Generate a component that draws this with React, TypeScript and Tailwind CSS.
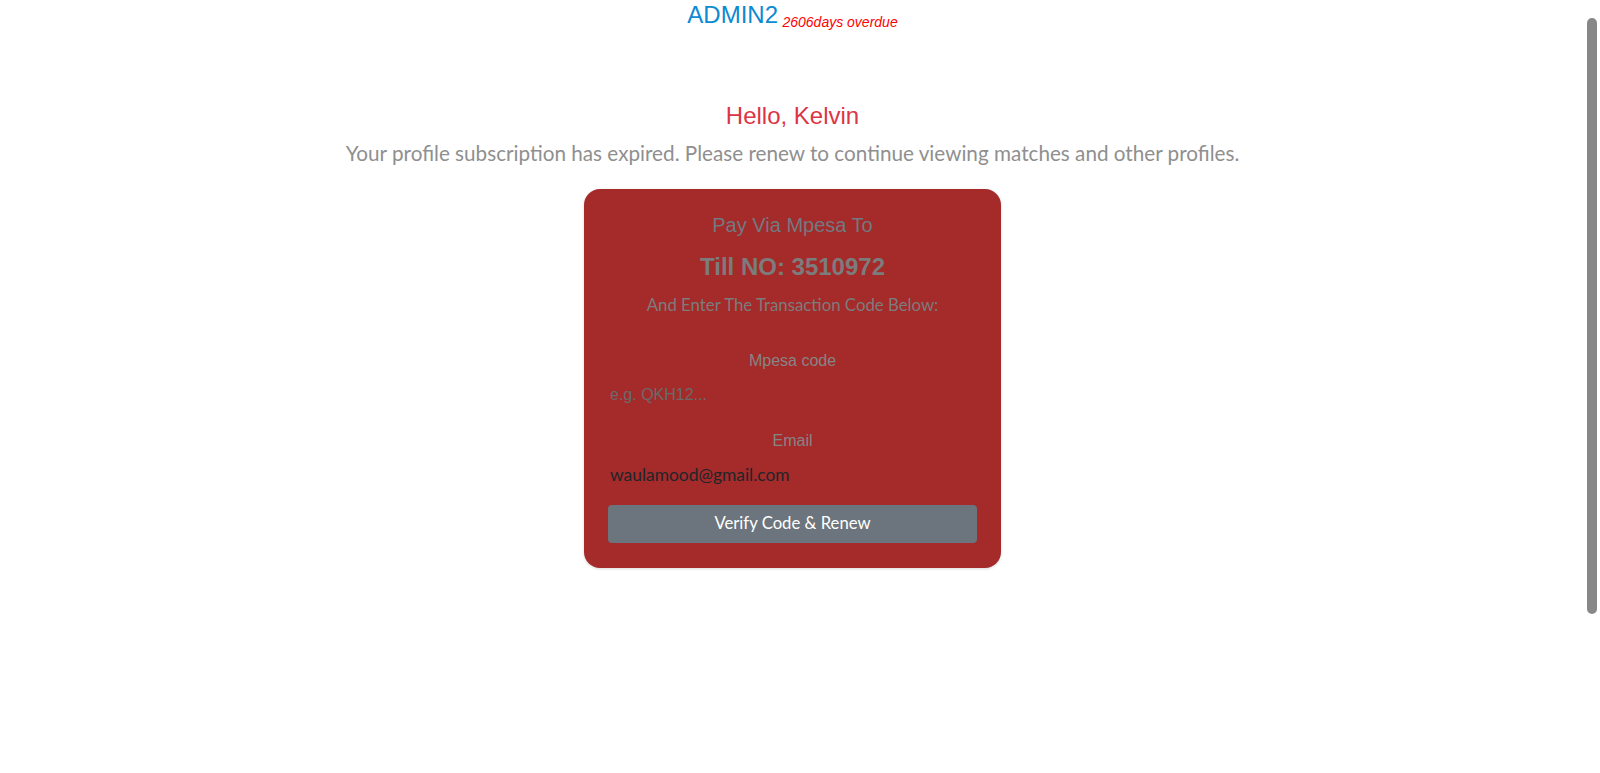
import React, { useState } from 'react';

const Header = () => (
  <div className="text-center leading-[30px] font-['Liberation_Sans',Arial,sans-serif]">
    <span className="text-[24px] text-[#0d8ad1]">ADMIN2</span>{' '}
    <span className="text-[14px] italic text-[#ff0000] leading-none align-[-4px]">2606days overdue</span>
  </div>
);

const PaymentCard = () => {
  const [code, setCode] = useState('');
  const [email, setEmail] = useState('waulamood@gmail.com');

  return (
    <form
      onSubmit={(e) => e.preventDefault()}
      className="w-[417px] mx-auto mt-[21px] bg-[#a52a2a] rounded-2xl shadow-[0_1px_3px_rgba(0,0,0,0.15)] px-6 pt-6 pb-[25px] flex flex-col"
    >
      <h5 className="text-center text-[20px] leading-6 text-[#727980] font-['Liberation_Sans',Arial,sans-serif]">
        Pay Via Mpesa To
      </h5>
      <h4 className="mt-[15px] text-center text-[24px] leading-[29px] font-bold text-[#7c7c7c] font-['Liberation_Sans',Arial,sans-serif]">
        Till NO: 3510972
      </h4>
      <p className="mt-[14px] text-center text-[16.8px] leading-5 text-[#7c7c7c] font-['Lato',sans-serif]">
        And Enter The Transaction Code Below:
      </p>

      <label className="mt-[36px] text-center text-[16px] leading-5 text-[#858585] font-['Liberation_Sans',Arial,sans-serif]">
        Mpesa code
      </label>
      <input
        value={code}
        onChange={(e) => setCode(e.target.value)}
        placeholder="e.g. QKH12..."
        className="mt-[5px] h-[38px] w-full bg-transparent outline-none px-0.5 text-[16px] text-[#212529] placeholder-[#6a6a6a] font-['Liberation_Sans',Arial,sans-serif]"
      />

      <label className="mt-[17px] text-center text-[16px] leading-5 text-[#858585] font-['Liberation_Sans',Arial,sans-serif]">
        Email
      </label>
      <input
        value={email}
        onChange={(e) => setEmail(e.target.value)}
        className="mt-1 h-[38px] w-full bg-transparent outline-none px-0.5 text-[17.4px] text-[#212529] font-['Lato',sans-serif]"
      />

      <button
        type="submit"
        className="mt-3 h-[38px] w-full rounded bg-[#6c757d] text-white text-[16.7px] font-['Lato',sans-serif]"
      >
        Verify Code &amp; Renew
      </button>
    </form>
  );
};

export default function App() {
  return (
    <div className="flex h-screen overflow-hidden bg-white">
      <main className="flex-1 min-w-0">
        <Header />
        <h3 className="mt-[68px] text-center text-[24px] leading-[29px] text-[#dc3545] font-['Liberation_Sans',Arial,sans-serif]">
          Hello, Kelvin
        </h3>
        <p className="mt-[8px] text-center text-[20.7px] leading-[30px] text-[#8f8f8f] font-['Lato',sans-serif]">
          Your profile subscription has expired. Please renew to continue viewing matches and other profiles.
        </p>
        <PaymentCard />
      </main>
      <aside className="w-[15px] shrink-0 pt-[18px] pl-[2px]">
        <div className="w-[10px] h-[596px] rounded-full bg-[#888]" />
      </aside>
    </div>
  );
}
